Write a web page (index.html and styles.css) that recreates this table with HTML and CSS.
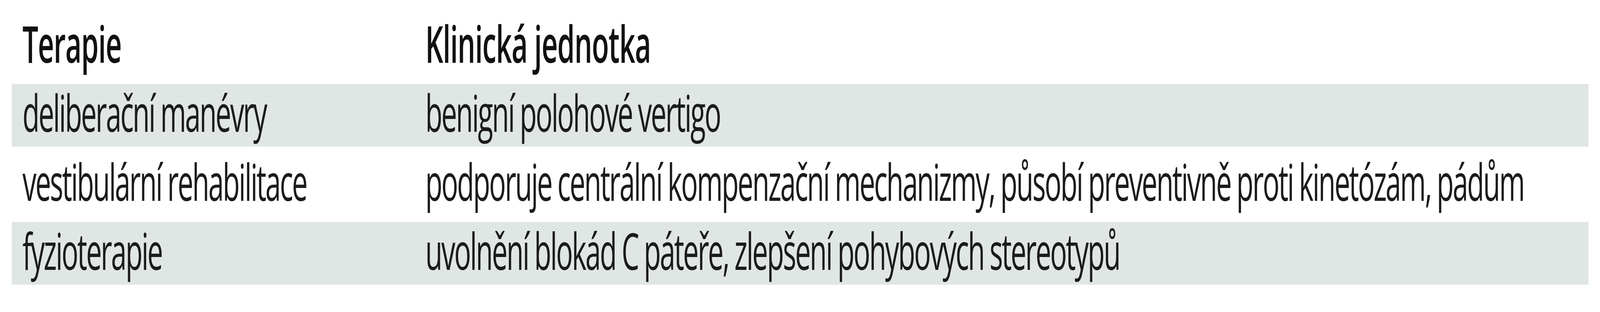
FILE: index.html
```html
<!DOCTYPE html>
<html lang="cs">
<head>
<meta charset="utf-8">
<title>Terapie</title>
<link rel="stylesheet" href="styles.css">
</head>
<body>
<main class="page">
  <table class="therapy">
    <thead>
      <tr class="head-row">
        <th class="col-therapy">Terapie</th>
        <th class="col-unit">Klinická jednotka</th>
      </tr>
    </thead>
    <tbody>
      <tr class="row shaded">
        <td>deliberační manévry</td>
        <td>benigní polohové vertigo</td>
      </tr>
      <tr class="row">
        <td>vestibulární rehabilitace</td>
        <td>podporuje centrální kompenzační mechanizmy, působí preventivně proti kinetózám, pádům</td>
      </tr>
      <tr class="row shaded">
        <td>fyzioterapie</td>
        <td>uvolnění blokád C páteře, zlepšení pohybových stereotypů</td>
      </tr>
    </tbody>
  </table>
</main>
</body>
</html>
```
FILE: styles.css
```css
html, body {
  margin: 0;
  padding: 0;
  background: #ffffff;
  overflow: hidden;
}

body {
  height: 800px;
  font-family: "Open Sans", "Noto Sans", sans-serif;
  color: #1b1b1b;
}

.page {
  width: 7408px;
  height: 800px;
  transform-origin: 0 0;
}

@media (max-width: 7407px) {
  .page { transform: scaleX(calc(4096 / 7408)); }
}

.therapy {
  border-collapse: separate;
  border-spacing: 0 16px;
  margin: 22px 0 0 54px;
  width: 7301px;
  table-layout: fixed;
}

.therapy th,
.therapy td {
  font-size: 130px;
  line-height: 145px;
  height: 145px;
  padding: 0 0 16px 50px;
  text-align: left;
  vertical-align: top;
  white-space: nowrap;
  letter-spacing: -5.4px;
  word-spacing: -2px;
}

.therapy th {
  font-weight: 600;
  color: #111111;
  letter-spacing: -2px;
  word-spacing: 0;
}

.therapy td {
  font-weight: 400;
}

.col-therapy {
  width: 1815px;
}

.row.shaded td {
  background: #e0e6e4;
}
```
